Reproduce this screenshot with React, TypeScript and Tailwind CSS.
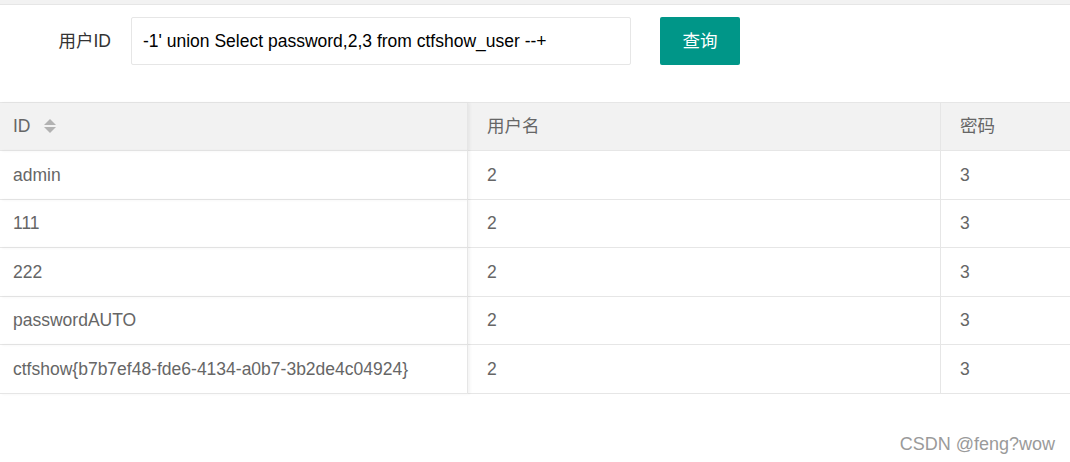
import React from "react";

const rows = [
  ["admin", "2", "3"],
  ["111", "2", "3"],
  ["222", "2", "3"],
  ["passwordAUTO", "2", "3"],
  ["ctfshow{b7b7ef48-fde6-4134-a0b7-3b2de4c04924}", "2", "3"],
];

function SortIcon() {
  return (
    <span className="ml-[13px] inline-flex flex-col items-center gap-[2px]">
      <span className="block w-0 h-0 border-l-[6px] border-r-[6px] border-b-[6px] border-l-transparent border-r-transparent border-b-[#b2b2b2]" />
      <span className="block w-0 h-0 border-l-[6px] border-r-[6px] border-t-[6px] border-l-transparent border-r-transparent border-t-[#b2b2b2]" />
    </span>
  );
}

export default function App() {
  return (
    <div
      className="relative w-[1070px] h-[462px] bg-white overflow-hidden"
      style={{ fontFamily: '"Liberation Sans", Arial, "Noto Sans CJK SC", sans-serif' }}
    >
      <div className="h-[5px] bg-[#f2f2f2] border-b border-[#e6e6e6]" />
      <div className="flex items-center mt-[12px] h-[48px]">
        <div className="w-[111px] text-right text-[17.5px] text-[#333]">用户ID</div>
        <div className="ml-[20px] w-[500px] h-[48px] border border-[#e6e6e6] rounded-[2px] flex items-center pl-[11px] text-[17.5px] text-black">
          -1' union Select password,2,3 from ctfshow_user --+
        </div>
        <div className="ml-[29px] w-[80px] h-[48px] bg-[#009688] rounded-[2px] flex items-center justify-center text-white text-[17.5px]">
          查询
        </div>
      </div>
      <div className="mt-[36.7px] border-t border-[#e6e6e6]">
        <div className="grid grid-cols-[468px_473px_1fr] h-[48.5px] bg-[#f2f2f2] text-[17.5px] text-[#666]">
          <div className="flex items-center pl-[13px] border-r border-b border-[#e6e6e6] shadow-[2px_0_3px_rgba(0,0,0,0.05)] z-10">
            ID
            <SortIcon />
          </div>
          <div className="flex items-center pl-[19px] border-r border-b border-[#e6e6e6]">用户名</div>
          <div className="flex items-center pl-[19px] border-b border-[#e6e6e6]">密码</div>
        </div>
        {rows.map((r, i) => (
          <div key={i} className="grid grid-cols-[468px_473px_1fr] h-[48.5px] text-[17.5px] text-[#666]">
            <div className="flex items-center pl-[13px] border-r border-b border-[#e6e6e6] shadow-[2px_0_3px_rgba(0,0,0,0.05)] z-10 whitespace-nowrap">
              {r[0]}
            </div>
            <div className="flex items-center pl-[19px] border-r border-b border-[#e6e6e6]">{r[1]}</div>
            <div className="flex items-center pl-[19px] border-b border-[#e6e6e6]">{r[2]}</div>
          </div>
        ))}
      </div>
      <div className="absolute right-[15px] top-[431px] text-[18px] text-[#9a9a9a]">CSDN @feng?wow</div>
    </div>
  );
}
